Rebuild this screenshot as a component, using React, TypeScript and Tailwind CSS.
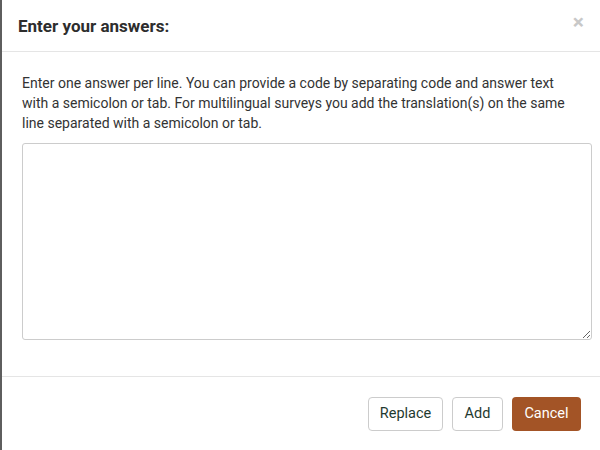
import React from 'react';

export default function App() {
  return (
    <div className="w-[600px] h-[450px] overflow-hidden bg-[#5e5e5e] flex font-['Roboto',sans-serif] text-[#333]">
      <div className="ml-[2px] w-[610px] shrink-0 bg-white flex flex-col">
        {/* Header */}
        <div className="h-[52px] flex items-center justify-between pl-[16px] pr-[28px] border-b border-[#e5e5e5]">
          <h4 className="text-[17px] font-bold text-[#2d2d2d] leading-none pt-[2px]">Enter your answers:</h4>
          <button className="text-[#c8c8c8] text-[21px] font-bold leading-none -mt-[6px]">×</button>
        </div>

        {/* Body */}
        <div className="pt-[21px] pl-[20px] pr-[18px] h-[325px] border-b border-[#e5e5e5]">
          <p className="text-[14px] leading-[20px] text-[#333] mb-[10px] w-[560px]">
            Enter one answer per line. You can provide a code by separating code and answer text with a semicolon or tab. For multilingual surveys you add the translation(s) on the same line separated with a semicolon or tab.
          </p>
          <textarea className="block w-[570px] h-[197px] border border-[#ccc] rounded-[3px] resize-y outline-none" />
        </div>

        {/* Footer */}
        <div className="flex items-center gap-[9px] pt-[20px] pl-[366px]">
          <button className="h-[34px] w-[75px] border border-[#ccc] rounded-[4px] bg-white text-[14.5px] text-[#1f3a30]">Replace</button>
          <button className="h-[34px] w-[51px] border border-[#ccc] rounded-[4px] bg-white text-[14.5px] text-[#1f3a30]">Add</button>
          <button className="h-[34px] w-[69px] rounded-[4px] bg-[#a35426] text-[14.5px] text-white">Cancel</button>
        </div>
      </div>
    </div>
  );
}
